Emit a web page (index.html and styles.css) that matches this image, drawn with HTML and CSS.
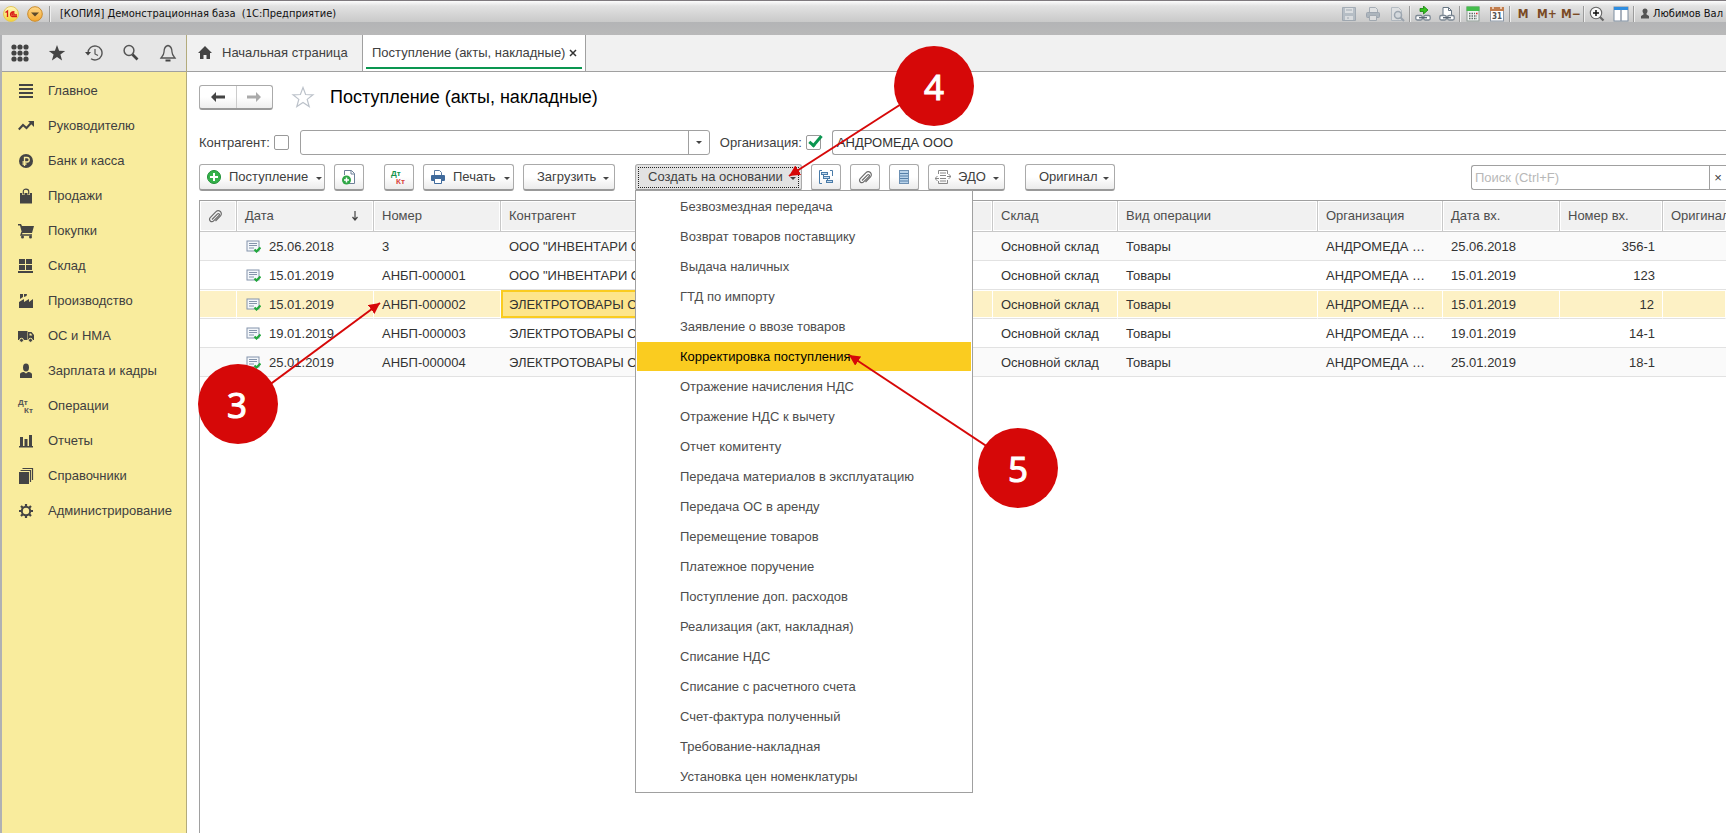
FILE: index.html
```
<!DOCTYPE html>
<html lang="ru">
<head>
<meta charset="utf-8">
<title>[КОПИЯ] Демонстрационная база (1С:Предприятие)</title>
<link rel="stylesheet" href="styles.css">
</head>
<body>
<svg class="defs" width="0" height="0" aria-hidden="true">
  <defs>
    <linearGradient id="gold" x1="0" y1="0" x2="0" y2="1"><stop offset="0" stop-color="#fff9c0"/><stop offset="1" stop-color="#f5d233"/></linearGradient>
    <linearGradient id="amber" x1="0" y1="0" x2="0" y2="1"><stop offset="0" stop-color="#ffd98a"/><stop offset="1" stop-color="#f5a62c"/></linearGradient>
  </defs>
  <symbol id="doc" viewBox="0 0 15 13">
    <rect x="1" y="1" width="12" height="10" fill="#f4f7fb" stroke="#8494ab"/>
    <path d="M3 3.500h8M3 5.500h8M3 8h5" stroke="#8494ab"/>
    <path d="M8.500 9.500l2 2L14.500 7.500" fill="none" stroke="#22a83c" stroke-width="2.200"/>
  </symbol>
  <symbol id="clip" viewBox="0 0 14 14">
    <path d="M4 10.500L9.600 4.900a1 1 0 0 1 1.500 1.500L5.600 11.900a2.300 2.300 0 0 1-3.400-3.300L8 2.700a3 3 0 0 1 4.500 4.200L7.500 12" fill="none" stroke="#6b6b6b" stroke-width="1.200"/>
  </symbol>
</svg>

<div class="app">
  <header class="titlebar">
    <svg class="brand" viewBox="0 0 16 16" width="16" height="16"><circle cx="8" cy="8" r="7.500" fill="url(#gold)" stroke="#e3c65a"/><path d="M2.500 6.500L4.500 5v6M11.500 6.200A2.500 2.500 0 1 0 9 10.500h5M11 8.200A1 1 0 1 0 9.500 8.800h4.500" fill="none" stroke="#d81818" stroke-width="1.300"/></svg>
    <button class="round" type="button" aria-label="Главное меню"><svg viewBox="0 0 16 16" width="16" height="16"><circle cx="8" cy="8" r="7.300" fill="url(#amber)" stroke="#c98a2b"/><path d="M4 6.500h8L8 10.500z" fill="#5c4a2c"/></svg></button>
    <i class="sep"></i>
    <span class="caption">[КОПИЯ] Демонстрационная база&nbsp; (1С:Предприятие)</span>
    <div class="tools">
      <button class="dim" type="button" aria-label="Сохранить"><svg viewBox="0 0 16 16" width="16" height="16"><path d="M1.500 1.500h13v13h-13z" fill="#a9b4bf" stroke="#8c98a5"/><path d="M4 2h8v5H4zM4 10h8v4H4z" fill="#dde1e5"/><path d="M5 4h6M6 12h2" stroke="#8c98a5"/></svg></button>
      <button class="dim" type="button" aria-label="Печать"><svg viewBox="0 0 16 16" width="16" height="16"><path d="M4.500 6V1.500h6l2 2V6" fill="#e2e4e6" stroke="#8f9aa5"/><rect x="1.500" y="6.500" width="13" height="5" rx="1" fill="#9ca8b3" stroke="#8591a0"/><path d="M4.500 9.500h7v5h-7z" fill="#e2e4e6" stroke="#8f9aa5"/></svg></button>
      <button class="dim" type="button" aria-label="Просмотр"><svg viewBox="0 0 16 16" width="16" height="16"><path d="M2.500 1.500h7l3 3v10h-10z" fill="#dfe2e5" stroke="#a3adb7"/><circle cx="9" cy="9" r="3.500" fill="#d3dae0" stroke="#8592a0" stroke-width="1.500"/><path d="M11.500 11.500l3.500 3.500" stroke="#8592a0" stroke-width="2"/></svg></button>
      <i class="sep"></i>
      <button type="button" aria-label="Получить ссылку"><svg viewBox="0 0 16 16" width="16" height="16"><path d="M5 2.500h3.500V0L13 4 8.500 8V5.500H5z" fill="#35c41d" stroke="#16800f" stroke-width=".8"/><rect x=".8" y="9.500" width="6.500" height="4.500" rx="1.500" fill="#fff" stroke="#7c8894" stroke-width="1.300"/><rect x="8.700" y="9.500" width="6.500" height="4.500" rx="1.500" fill="#fff" stroke="#7c8894" stroke-width="1.300"/><path d="M4 11.700h8" stroke="#566270" stroke-width="1.300"/></svg></button>
      <button type="button" aria-label="Перейти по ссылке"><svg viewBox="0 0 16 16" width="16" height="16"><path d="M4 9.500V1.500h5.500l3 3v5" fill="#fff" stroke="#667583"/><path d="M9.500 1.500v3h3" fill="none" stroke="#667583"/><rect x=".8" y="9.500" width="6.500" height="4.500" rx="1.500" fill="#fff" stroke="#7c8894" stroke-width="1.300"/><rect x="8.700" y="9.500" width="6.500" height="4.500" rx="1.500" fill="#fff" stroke="#7c8894" stroke-width="1.300"/><path d="M4 11.700h8" stroke="#566270" stroke-width="1.300"/></svg></button>
      <i class="sep"></i>
      <button type="button" aria-label="Калькулятор"><svg viewBox="0 0 16 16" width="16" height="16"><rect x="2" y="1" width="12" height="14" fill="#f1f4f3" stroke="#8d9a94"/><rect x="1.500" y=".5" width="13" height="4.500" fill="#43bd4b"/><path d="M4 7.500h6M4 10h8M4 12.500h8" stroke="#5f6e68" stroke-width="1.500" stroke-dasharray="1.500 1"/><path d="M11 7.500h1.500" stroke="#d22" stroke-width="1.500"/></svg></button>
      <button type="button" aria-label="Календарь"><svg viewBox="0 0 16 16" width="16" height="16"><rect x="1.500" y="2" width="13" height="13" fill="#fff" stroke="#8b97a6"/><rect x="1" y="1" width="14" height="4" fill="#c27c4c"/><path d="M4 0v3M12 0v3" stroke="#f3dfd0" stroke-width="1.500"/><text x="8" y="13" class="cal-day">31</text></svg></button>
      <i class="sep"></i>
      <button class="mem" type="button">M</button>
      <button class="mem" type="button">M+</button>
      <button class="mem" type="button">M−</button>
      <i class="sep"></i>
      <button type="button" aria-label="Масштаб"><svg viewBox="0 0 16 16" width="16" height="16"><circle cx="7" cy="7" r="5.700" fill="#fafafa" stroke="#666" stroke-width="1.100"/><path d="M4 7h6M7 4v6" stroke="#111" stroke-width="1.500"/><path d="M11 11l3.500 3.500" stroke="#666" stroke-width="2.200"/></svg></button>
      <button type="button" aria-label="Панели"><svg viewBox="0 0 16 16" width="16" height="16"><rect x="1" y="1" width="14" height="14" fill="#fff" stroke="#7d8da0"/><rect x="1" y="1" width="14" height="3" fill="#2e8de0"/><path d="M8 4v11" stroke="#8d99a8" stroke-width="1.500"/></svg></button>
      <i class="sep"></i>
      <span class="user"><svg viewBox="0 0 10 12" width="10" height="12"><circle cx="5" cy="3" r="2.500" fill="#555"/><path d="M3.500 5h3v1.500L9 8v2.500H1V8l2.500-1.500z" fill="#555"/></svg>Любимов Вал</span>
    </div>
  </header>

  <div class="shell">
    <aside class="side">
      <div class="quick">
        <button type="button" aria-label="Меню функций"><svg viewBox="0 0 18 18" width="18" height="18" fill="#444"><circle cx="3" cy="3" r="2.600"/><circle cx="9" cy="3" r="2.600"/><circle cx="15" cy="3" r="2.600"/><circle cx="3" cy="9" r="2.600"/><circle cx="9" cy="9" r="2.600"/><circle cx="15" cy="9" r="2.600"/><circle cx="3" cy="15" r="2.600"/><circle cx="9" cy="15" r="2.600"/><circle cx="15" cy="15" r="2.600"/></svg></button>
        <button type="button" aria-label="Избранное"><svg viewBox="0 0 18 18" width="18" height="18"><path d="M9 1l2.100 5.700 6.100.2-4.800 3.700 1.700 5.900L9 13.100l-5.100 3.400 1.700-5.900L.8 6.900l6.100-.2z" fill="#444"/></svg></button>
        <button type="button" aria-label="История"><svg viewBox="0 0 18 18" width="18" height="18"><path d="M3 9a7 7 0 1 1 3 5.700" fill="none" stroke="#555" stroke-width="1.400"/><path d="M0 8h6L3 11.500z" fill="#444"/><path d="M10 5v5l3 1.500" fill="none" stroke="#555" stroke-width="1.200"/></svg></button>
        <button type="button" aria-label="Поиск"><svg viewBox="0 0 18 18" width="18" height="18"><circle cx="7" cy="6.500" r="4.900" fill="none" stroke="#555" stroke-width="1.500"/><path d="M10.500 10.500l5 5" stroke="#444" stroke-width="2.600"/></svg></button>
        <button type="button" aria-label="Оповещения"><svg viewBox="0 0 18 18" width="18" height="18"><path d="M9 1.500c-4 1-4 4-4 6.500S3.500 12 2 14h14c-1.500-2-3-3.500-3-6s0-5.500-4-6.500z" fill="none" stroke="#555" stroke-width="1.300"/><path d="M6.500 16.500h5" stroke="#444" stroke-width="2"/></svg></button>
      </div>
      <nav class="sections">
        <a href="#"><svg viewBox="0 0 16 16" width="16" height="16"><path d="M1 2h14M1 6h14M1 10h14M1 14h14" stroke="#444" stroke-width="2"/></svg>Главное</a>
        <a href="#"><svg viewBox="0 0 16 16" width="16" height="16"><path d="M.8 11.500L5 7l3.500 3L14 4" fill="none" stroke="#444" stroke-width="2"/><path d="M10 3h6v6z" fill="#444"/></svg>Руководителю</a>
        <a href="#"><svg viewBox="0 0 16 16" width="16" height="16"><circle cx="8" cy="8" r="7" fill="#444"/><path d="M6.500 13V4.500h2.500a2 2 0 0 1 0 4.500H4.500M4.500 11h4" fill="none" stroke="#f9ec9d" stroke-width="1.300"/></svg>Банк и касса</a>
        <a href="#"><svg viewBox="0 0 16 16" width="16" height="16"><path d="M2 5h12v10.500H2z" fill="#444"/><path d="M5.300 7V3.300C5.300 0 10.700 0 10.700 3.300V7" fill="none" stroke="#f9ec9d" stroke-width="2.400"/><path d="M5.300 6.500V3.300C5.300.300 10.700.300 10.700 3.300V6.500" fill="none" stroke="#444" stroke-width="1.200"/></svg>Продажи</a>
        <a href="#"><svg viewBox="0 0 16 16" width="16" height="16"><path d="M0 1h3l1 2h12l-2 7H4L2 2.500H0z" fill="#444"/><path d="M4 9l-1 3h11" fill="none" stroke="#444" stroke-width="1.400"/><circle cx="4.500" cy="14" r="1.500" fill="#444"/><circle cx="12.500" cy="14" r="1.500" fill="#444"/></svg>Покупки</a>
        <a href="#"><svg viewBox="0 0 16 16" width="16" height="16"><path d="M1 1h6v5H1zM8 1h6v5H8zM1 7h6v5H1zM8 7h6v5H8zM0 13h15v2H0z" fill="#444"/></svg>Склад</a>
        <a href="#"><svg viewBox="0 0 16 16" width="16" height="16"><path d="M1 15V9l5-3v3l5-3v3l4-3v9z" fill="#444"/><path d="M2 1h3v3L2 6zM6 1h3L8.500 3 6 4z" fill="#444"/></svg>Производство</a>
        <a href="#"><svg viewBox="0 0 16 16" width="16" height="16"><path d="M0 3h9.500v9H0zM10 4h3.500L16 7v5h-6z" fill="#444"/><path d="M11.500 5.500h1.500l1.300 2h-2.800z" fill="#f9ec9d"/><circle cx="3.500" cy="12.300" r="2" fill="#444" stroke="#f9ec9d"/><circle cx="12.500" cy="12.300" r="2" fill="#444" stroke="#f9ec9d"/></svg>ОС и НМА</a>
        <a href="#"><svg viewBox="0 0 16 16" width="16" height="16"><ellipse cx="8" cy="4.500" rx="3" ry="4" fill="#444"/><path d="M2 15v-3.500c0-2 3-2.500 4-2.500l2 1.500L10 9c1 0 4 .5 4 2.500V15z" fill="#444"/></svg>Зарплата и кадры</a>
        <a href="#"><svg class="dtkt" viewBox="0 0 16 16" width="16" height="16"><text x="0" y="7">Дт</text><text x="6" y="15">Кт</text></svg>Операции</a>
        <a href="#"><svg viewBox="0 0 16 16" width="16" height="16"><path d="M2 4h3v9H2zM6.500 6h3v7h-3zM11 2h3v11h-3zM1 13h14v1.500H1z" fill="#444"/></svg>Отчеты</a>
        <a href="#"><svg viewBox="0 0 16 16" width="16" height="16"><path d="M1 4h10v12H1z" fill="#444"/><path d="M2.500 2.500h10V14M4.500.500h10V12" fill="none" stroke="#444" stroke-width="1.200"/></svg>Справочники</a>
        <a href="#"><svg viewBox="0 0 16 16" width="16" height="16"><circle cx="8" cy="8" r="4.200" fill="none" stroke="#444" stroke-width="2"/><path d="M8 1v2.500M8 12.500V15M1 8h2.500M12.500 8H15M3 3l2 2M11 11l2 2M3 13l2-2M11 5l2-2" stroke="#444" stroke-width="2.200"/></svg>Администрирование</a>
      </nav>
    </aside>

    <main class="work">
      <div class="tabs">
        <a class="tab home" href="#"><svg viewBox="0 0 14 14" width="14" height="14"><path d="M7 0l7 7h-2v6H8.500V9h-3v4H2V7H0z" fill="#444"/></svg>Начальная страница</a>
        <a class="tab active" href="#"><span>Поступление (акты, накладные)</span><svg viewBox="0 0 8 8" width="8" height="8"><path d="M1 1l6 6M7 1L1 7" stroke="#333" stroke-width="1.500"/></svg></a>
      </div>

      <div class="form">
        <div class="heading">
          <div class="nav">
            <button type="button" aria-label="Назад"><svg viewBox="0 0 14 10" width="14" height="10"><path d="M0 5l5-5v3.500h9v3H5V10z" fill="#444"/></svg></button>
            <button type="button" aria-label="Вперед"><svg viewBox="0 0 14 10" width="14" height="10"><path d="M14 5L9 0v3.500H0v3h9V10z" fill="#aaa"/></svg></button>
          </div>
          <button class="fav" type="button" aria-label="В избранное"><svg viewBox="0 0 24 22" width="24" height="22"><path d="M12 1.500l2.600 7 7.400.3-5.800 4.600 2 7.100L12 16.400l-6.200 4.100 2-7.100L2 8.800l7.400-.3z" fill="#fff" stroke="#bcc2ca" stroke-width="1.200"/></svg></button>
          <h1>Поступление (акты, накладные)</h1>
        </div>

        <div class="filters">
          <label for="use-partner">Контрагент:</label>
          <input class="check" id="use-partner" type="checkbox">
          <div class="combo">
            <input type="text" aria-label="Контрагент">
            <button type="button" aria-label="Выбрать"><i class="caret"></i></button>
          </div>
          <label for="use-org">Организация:</label>
          <input class="check" id="use-org" type="checkbox" checked>
          <input class="org" type="text" aria-label="Организация" value="АНДРОМЕДА ООО">
        </div>

        <div class="toolbar">
          <button class="btn b-receipt" type="button"><svg viewBox="0 0 14 14" width="14" height="14"><circle cx="7" cy="7" r="6.500" fill="#35b24a" stroke="#1f8f35"/><path d="M7 3v8M3 7h8" stroke="#fff" stroke-width="2"/></svg><span>Поступление</span><i class="caret"></i></button>
          <button class="btn b-icon" type="button" aria-label="Скопировать"><svg viewBox="0 0 16 16" width="16" height="16"><path d="M3.500 6V1.500h7l3 3v10H8" fill="#fff" stroke="#6d8098"/><path d="M10 1.500v3.500h3.500" fill="none" stroke="#6d8098"/><circle cx="5.500" cy="11" r="4.500" fill="#2ea745"/><path d="M5.500 8.500v5M3 11h5" stroke="#fff" stroke-width="1.500"/></svg></button>
          <button class="btn b-icon apart" type="button" aria-label="Проводки"><svg class="dtkt color" viewBox="0 0 16 16" width="16" height="16"><text x="0" y="7">Дт</text><text class="kt" x="5" y="15">Кт</text></svg></button>
          <button class="btn b-print" type="button"><svg viewBox="0 0 14 14" width="14" height="14"><path d="M3.500 6V.500h5l2 2V6" fill="#fff" stroke="#5a7ba3"/><rect y="5" width="14" height="6" rx="1" fill="#3f6a9c"/><path d="M3.500 8.500h7v5h-7z" fill="#fff" stroke="#3f6a9c"/></svg><span>Печать</span><i class="caret"></i></button>
          <button class="btn b-load" type="button"><span>Загрузить</span><i class="caret"></i></button>
          <div class="dropdown apart">
            <button class="btn b-create" type="button" aria-expanded="true"><span>Создать на основании</span><i class="caret"></i></button>
            <ul class="menu">
              <li><button type="button">Безвозмездная передача</button></li>
              <li><button type="button">Возврат товаров поставщику</button></li>
              <li><button type="button">Выдача наличных</button></li>
              <li><button type="button">ГТД по импорту</button></li>
              <li><button type="button">Заявление о ввозе товаров</button></li>
              <li><button class="current" type="button">Корректировка поступления</button></li>
              <li><button type="button">Отражение начисления НДС</button></li>
              <li><button type="button">Отражение НДС к вычету</button></li>
              <li><button type="button">Отчет комитенту</button></li>
              <li><button type="button">Передача материалов в эксплуатацию</button></li>
              <li><button type="button">Передача ОС в аренду</button></li>
              <li><button type="button">Перемещение товаров</button></li>
              <li><button type="button">Платежное поручение</button></li>
              <li><button type="button">Поступление доп. расходов</button></li>
              <li><button type="button">Реализация (акт, накладная)</button></li>
              <li><button type="button">Списание НДС</button></li>
              <li><button type="button">Списание с расчетного счета</button></li>
              <li><button type="button">Счет-фактура полученный</button></li>
              <li><button type="button">Требование-накладная</button></li>
              <li><button type="button">Установка цен номенклатуры</button></li>
            </ul>
          </div>
          <button class="btn b-icon" type="button" aria-label="Структура подчиненности"><svg viewBox="0 0 16 16" width="16" height="16" fill="#c5dcf0" stroke="#4a7ba8"><path d="M4 1.500H1.500v13H4M12 1.500h2.500V7M5.500 5.500v3M9.500 9.500v3" fill="none"/><rect x="3.500" y="3.500" width="6" height="2"/><rect x="5.500" y="7.500" width="6" height="2"/><rect x="8.500" y="11.500" width="6" height="2"/></svg></button>
          <button class="btn b-icon" type="button" aria-label="Присоединенные файлы"><svg width="14" height="14"><use href="#clip"/></svg></button>
          <button class="btn b-icon" type="button" aria-label="Реестр"><svg viewBox="0 0 16 16" width="16" height="16"><rect x="3.500" y="1.500" width="9" height="13" fill="#b9d3ea" stroke="#6c8fb2"/><path d="M4 4.500h8M4 7h8M4 9.500h8M4 12h8" stroke="#557fa8"/></svg></button>
          <button class="btn b-edo" type="button"><svg viewBox="0 0 16 16" width="16" height="16" fill="none" stroke="#888"><path d="M3.500 5V1.500h9V5M3.500 12v2.500h9V11M5 4h6M5 6.500h6M5 9.500h6M5 12h6M0 9.500h4M12 7.500h4"/><path d="M2.500 7L0 9.500 2.500 12M13.500 5L16 7.500 13.500 10"/></svg><span>ЭДО</span><i class="caret"></i></button>
          <button class="btn b-orig apart" type="button"><span>Оригинал</span><i class="caret"></i></button>
          <div class="search">
            <input type="text" placeholder="Поиск (Ctrl+F)" aria-label="Поиск">
            <button type="button" aria-label="Очистить">×</button>
          </div>
        </div>

        <div class="grid">
          <table>
            <colgroup><col class="c-clip"><col class="c-date"><col class="c-num"><col><col class="c-sum"><col class="c-store"><col class="c-kind"><col class="c-org"><col class="c-in"><col class="c-no"><col class="c-orig"></colgroup>
            <thead>
              <tr><th aria-label="Файлы"><svg width="14" height="14"><use href="#clip"/></svg></th><th><span class="sorted">Дата<svg viewBox="0 0 8 10" width="8" height="10"><path d="M4 0v9M1.500 6L4 9l2.500-3" fill="none" stroke="#444" stroke-width="1.200"/></svg></span></th><th>Номер</th><th>Контрагент</th><th></th><th>Склад</th><th>Вид операции</th><th>Организация</th><th>Дата вх.</th><th>Номер вх.</th><th>Оригинал</th></tr>
            </thead>
            <tbody>
              <tr><td></td><td><span class="posted"><svg width="15" height="13"><use href="#doc"/></svg>25.06.2018</span></td><td>3</td><td>ООО "ИНВЕНТАРИ С</td><td></td><td>Основной склад</td><td>Товары</td><td>АНДРОМЕДА …</td><td>25.06.2018</td><td class="num">356-1</td><td></td></tr>
              <tr><td></td><td><span class="posted"><svg width="15" height="13"><use href="#doc"/></svg>15.01.2019</span></td><td>АНБП-000001</td><td>ООО "ИНВЕНТАРИ С</td><td></td><td>Основной склад</td><td>Товары</td><td>АНДРОМЕДА …</td><td>15.01.2019</td><td class="num">123</td><td></td></tr>
              <tr class="selected"><td></td><td><span class="posted"><svg width="15" height="13"><use href="#doc"/></svg>15.01.2019</span></td><td>АНБП-000002</td><td class="focus">ЭЛЕКТРОТОВАРЫ С</td><td></td><td>Основной склад</td><td>Товары</td><td>АНДРОМЕДА …</td><td>15.01.2019</td><td class="num">12</td><td></td></tr>
              <tr><td></td><td><span class="posted"><svg width="15" height="13"><use href="#doc"/></svg>19.01.2019</span></td><td>АНБП-000003</td><td>ЭЛЕКТРОТОВАРЫ С</td><td></td><td>Основной склад</td><td>Товары</td><td>АНДРОМЕДА …</td><td>19.01.2019</td><td class="num">14-1</td><td></td></tr>
              <tr><td></td><td><span class="posted"><svg width="15" height="13"><use href="#doc"/></svg>25.01.2019</span></td><td>АНБП-000004</td><td>ЭЛЕКТРОТОВАРЫ С</td><td></td><td>Основной склад</td><td>Товары</td><td>АНДРОМЕДА …</td><td>25.01.2019</td><td class="num">18-1</td><td></td></tr>
            </tbody>
          </table>
        </div>
      </div>
    </main>
  </div>

  <svg class="callouts">
    <defs><marker id="head" viewBox="0 0 10 10" refX="10" refY="5" markerWidth="11" markerHeight="11" markerUnits="userSpaceOnUse" orient="auto"><path d="M0 0l10 5-10 5z" fill="#d60808"/></marker></defs>
    <g stroke="#d60808" stroke-width="2" marker-end="url(#head)">
      <line x1="238" y1="408" x2="380" y2="303"/>
      <line x1="934" y1="83" x2="789" y2="176"/>
      <line x1="1018" y1="467" x2="849" y2="355"/>
    </g>
    <g fill="#d60808"><circle cx="238" cy="404" r="40"/><circle cx="934" cy="86" r="40"/><circle cx="1018" cy="468" r="40"/></g>
    <g class="digits"><text x="237" y="418">3</text><text x="934" y="100">4</text><text x="1018" y="482">5</text></g>
  </svg>
</div>
</body>
</html>
```
FILE: styles.css
```
* { box-sizing: border-box; }

body {
  margin: 0;
  overflow: hidden;
  background: #fff;
  color: #404040;
  font: 13px/16px "Liberation Sans", Arial, sans-serif;
}

button, input { font: inherit; color: inherit; }
button { padding: 0; border: 0; background: none; }
a { color: inherit; text-decoration: none; }
svg { display: block; flex: none; }
.defs { position: absolute; }

.app { position: relative; display: flex; flex-direction: column; height: 100vh; }

/* Title bar */
.titlebar {
  display: flex;
  align-items: center;
  height: 35px;
  padding: 0 0 9px 2px;
  border-top: 1px solid #7f7a7e;
  background: linear-gradient(#fdfdfd 0, #e2e2e2 5px, #c9c9c9 21px, #b3b4b6 21px, #b9b9b9 100%);
  color: #111;
  font-family: "DejaVu Sans Condensed", Tahoma, sans-serif;
  font-size: 11px;
}
.brand { margin-right: 8px; margin-left: 1px; }
.round { margin-right: 6px; }
.sep { width: 2px; height: 16px; border-left: 1px solid #9b9b9b; border-right: 1px solid #eee; }
.caption { margin-left: 9px; white-space: pre; }
.tools { display: flex; align-items: center; margin-left: auto; }
.tools button { display: flex; justify-content: center; width: 24px; }
.tools .dim { opacity: .7; }
.tools .mem { color: #7a4a25; font-size: 12px; font-weight: bold; }
.cal-day { font-size: 8px; font-weight: bold; text-anchor: middle; fill: #555; }
.user { display: flex; align-items: center; gap: 3px; width: 91px; padding-left: 5px; white-space: nowrap; }

/* Section panel */
.shell { display: flex; flex: 1; min-height: 0; border-left: 2px solid #b0b1b4; }
.side { display: flex; flex-direction: column; flex: none; width: 185px; border-right: 1px solid #b3ab7c; }
.quick {
  display: flex;
  align-items: center;
  gap: 19px;
  height: 37px;
  padding-left: 9px;
  border-bottom: 1px solid #a0a0a0;
  background: #e6e6e6;
}
.sections { flex: 1; padding-top: 1px; background: #f9ec9d; }
.sections a { display: flex; align-items: center; gap: 14px; height: 35px; padding-left: 16px; white-space: nowrap; }
.dtkt { font-size: 8px; font-weight: bold; fill: #555; overflow: visible; }
.dtkt.color { fill: #13924a; }
.dtkt .kt { fill: #555; }
.dtkt.color .kt { fill: #d9433c; }

/* Open windows */
.work { display: flex; flex-direction: column; flex: 1; min-width: 0; }
.tabs { display: flex; flex: none; height: 37px; border-bottom: 1px solid #a0a0a0; background: #f1f1f1; }
.tab { display: flex; align-items: center; border-right: 1px solid #a0a0a0; white-space: nowrap; }
.home { gap: 10px; width: 176px; padding-left: 11px; }
.active { position: relative; gap: 4px; width: 223px; padding-left: 9px; background: #fff; }
.active::after { content: ""; position: absolute; right: 3px; bottom: 2px; left: 3px; height: 2px; background: #0a9650; }

.form { display: flex; flex-direction: column; flex: 1; min-height: 0; padding: 12px 0 0 12px; }
.heading { display: flex; align-items: center; height: 26px; }
.nav { display: flex; width: 74px; height: 25px; border: 1px solid #aaa; border-bottom: 2px solid #999; border-radius: 3px; background: linear-gradient(#fff 50%, #eee); }
.nav button { display: flex; align-items: center; justify-content: center; flex: 1; }
.nav button + button { border-left: 1px solid #ccc; }
.fav { margin: 0 15px 0 18px; }
h1 { margin: 0; color: #000; font-size: 18px; font-weight: normal; line-height: 24px; }

/* Filters */
.filters { display: flex; align-items: center; height: 25px; margin-top: 20px; }
.check {
  position: relative;
  appearance: none;
  flex: none;
  width: 15px;
  height: 15px;
  margin: 0 11px 0 4px;
  border: 1px solid #999;
  border-radius: 2px;
  background: #fff;
}
.check:checked::after {
  content: "";
  position: absolute;
  top: -3px;
  left: 5px;
  width: 4px;
  height: 11px;
  border: solid #0a9650;
  border-width: 0 3px 3px 0;
  transform: rotate(40deg);
}
.combo { display: flex; width: 410px; height: 25px; margin-right: 10px; border: 1px solid #a0a0a0; border-radius: 3px; }
.combo input { flex: 1; min-width: 0; border: 0; background: none; }
.combo button { display: flex; align-items: center; justify-content: center; width: 21px; border-left: 1px solid #a0a0a0; }
.org { flex: 1; min-width: 0; height: 25px; padding: 0 4px; border: 1px solid #a0a0a0; border-right: 0; border-radius: 3px 0 0 3px; color: #333; }
.caret { width: 0; height: 0; border: solid transparent; border-width: 3px 3px 0; border-top-color: #444; }

/* Command bar */
.toolbar { display: flex; align-items: center; gap: 9px; margin-top: 9px; }
.btn {
  display: flex;
  align-items: center;
  flex: none;
  height: 27px;
  border: 1px solid #aaa;
  border-bottom: 2px solid #999;
  border-radius: 3px;
  background: linear-gradient(#fff 50%, #ebebeb);
  white-space: nowrap;
}
.btn .caret { margin-top: 2px; margin-left: auto; }
.apart { margin-left: 11px; }
.b-icon { justify-content: center; width: 30px; }
.b-receipt { width: 126px; padding: 0 5px 0 7px; gap: 8px; }
.b-print { width: 91px; padding: 0 5px 0 7px; gap: 8px; }
.b-load { width: 92px; padding: 0 5px 0 13px; }
.b-edo { width: 77px; padding: 0 5px 0 6px; gap: 7px; }
.b-orig { width: 90px; padding: 0 5px 0 13px; }
.b-create {
  width: 167px;
  padding: 0 5px 0 12px;
  background: #e2e2e2;
  outline: 1px dotted #222;
  outline-offset: -4px;
}
.dropdown { position: relative; }
.menu {
  position: absolute;
  z-index: 2;
  top: 26px;
  left: 0;
  width: 338px;
  margin: 0;
  padding: 1px 1px 0;
  border: 1px solid #a0a0a0;
  background: #fff;
  list-style: none;
}
.menu li { height: 30px; }
.menu button { display: block; width: 100%; height: 29px; padding-left: 43px; color: #4d4d4d; text-align: left; }
.menu .current { background: #facc20; color: #000; }
.search { display: flex; width: 255px; height: 25px; margin-left: auto; border: 1px solid #a0a0a0; border-right: 0; border-radius: 3px 0 0 3px; }
.search input { flex: 1; min-width: 0; padding: 0 3px; border: 0; background: none; }
.search input::placeholder { color: #b8b8b8; }
.search button { width: 17px; border-left: 1px solid #a0a0a0; }

/* Document list */
.grid { flex: 1; margin-top: 9px; border: solid #a0a0a0; border-width: 1px 0 0 1px; overflow: hidden; }
table { width: 100%; border-collapse: separate; border-spacing: 0; table-layout: fixed; }
th, td { padding: 0 0 0 8px; overflow: hidden; font-weight: normal; text-align: left; white-space: nowrap; }
th { height: 31px; border-right: 1px solid #c8c8c8; border-bottom: 1px solid #c8c8c8; background: #f1f1f1; box-shadow: inset 0 0 0 1px #fff; color: #4d4d4d; }
td { height: 29px; padding-top: 1px; border-bottom: 1px solid #e2e2e2; color: #333; }
th:last-child { overflow: visible; border-right: 0; }
tbody tr:nth-child(odd) { background: #fafafa; }
tbody .selected td { border-right: 1px solid #fff; background: #fdf1c5; box-shadow: inset 0 1px #fff, inset 0 -1px #fff; }
tbody .selected .focus { background: #fde58c; box-shadow: inset 0 0 0 2px #facc20; }
.num { padding-right: 8px; text-align: right; }
.c-clip { width: 37px; }
.c-date { width: 137px; }
.c-num { width: 127px; }
.c-sum { width: 120px; }
.c-store { width: 125px; }
.c-kind { width: 200px; }
.c-org { width: 125px; }
.c-in { width: 117px; }
.c-no { width: 103px; }
.c-orig { width: 63px; }
.sorted { display: flex; align-items: center; justify-content: space-between; padding-right: 14px; }
.posted { display: flex; align-items: center; gap: 8px; padding-left: 1px; }

/* Numbered callouts lie over the whole window */
.callouts { position: absolute; z-index: 3; inset: 0; width: 100%; height: 100%; pointer-events: none; }
.digits { fill: #fff; stroke: #fff; stroke-width: 1; font-family: "Noto Sans", "Open Sans", sans-serif; font-size: 35px; text-anchor: middle; }
```
